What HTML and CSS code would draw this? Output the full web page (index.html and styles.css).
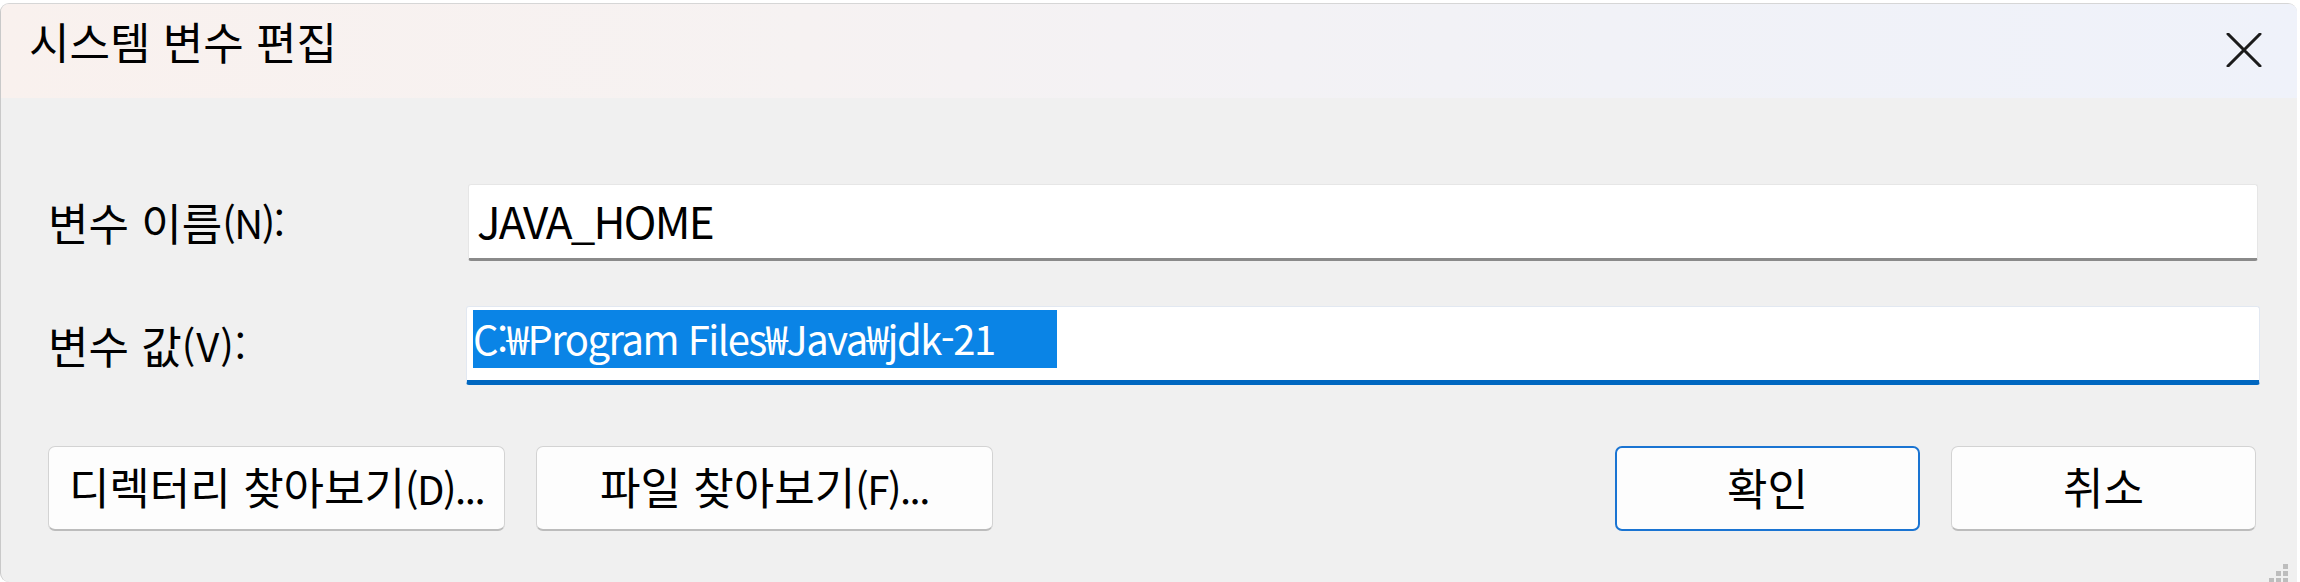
FILE: index.html
```html
<!DOCTYPE html>
<html lang="ko">
<head>
<meta charset="utf-8">
<title>시스템 변수 편집</title>
<link rel="stylesheet" href="styles.css">
</head>
<body>
<div class="window">
  <header class="titlebar">
    <span class="title">시스템 변수 편집</span>
    <svg class="close" width="36" height="34" viewBox="0 0 36 34" aria-label="닫기">
      <path d="M2 1 L34 33 M34 1 L2 33" stroke="#1b1b1b" stroke-width="3" stroke-linecap="round"/>
    </svg>
  </header>
  <main class="content">
    <div class="form">
      <label class="label">변수 이름<span class="latin">(N):</span></label>
      <div class="field"><span class="value">JAVA_HOME</span></div>
      <label class="label">변수 값<span class="latin wider">(V):</span></label>
      <div class="field focused"><span class="selected">C:₩Program Files₩Java₩jdk-21</span></div>
    </div>
    <div class="buttons">
      <div class="group">
        <button class="btn wide">디렉터리 찾아보기<span class="latin">(D)...</span></button>
        <button class="btn wide">파일 찾아보기<span class="latin">(F)...</span></button>
      </div>
      <div class="group">
        <button class="btn primary">확인</button>
        <button class="btn">취소</button>
      </div>
    </div>
  </main>
  <svg class="grip" width="24" height="24" viewBox="0 0 24 24">
    <rect x="16" y="2" width="5" height="5" fill="#bdbdbd"/>
    <rect x="9" y="9" width="5" height="5" fill="#bdbdbd"/>
    <rect x="16" y="9" width="5" height="5" fill="#bdbdbd"/>
    <rect x="2" y="16" width="5" height="5" fill="#bdbdbd"/>
    <rect x="9" y="16" width="5" height="5" fill="#bdbdbd"/>
    <rect x="16" y="16" width="5" height="5" fill="#bdbdbd"/>
  </svg>
</div>
</body>
</html>
```
FILE: styles.css
```css
* { box-sizing: border-box; }
html, body { margin: 0; padding: 0; background: #ffffff; }
body {
  font-family: "Noto Sans CJK KR", "Noto Sans", sans-serif;
  color: #000;
  overflow: hidden;
}
.window {
  position: relative;
  margin-top: 3px;
  width: 2297px;
  height: 579px;
  background: #f0f0f0;
  border-radius: 9px 9px 0 9px;
  border-left: 1px solid #c9c9c9;
  border-top: 1px solid #d6d6d6;
  display: flex;
  flex-direction: column;
  overflow: hidden;
}
.titlebar {
  height: 94px;
  flex: none;
  display: flex;
  align-items: center;
  justify-content: space-between;
  padding: 0 35px 4px 28px;
  background: linear-gradient(90deg, #f9f1ee 0%, #f6f2f2 35%, #f1f2f7 70%, #eff2fa 100%);
}
.title {
  font-size: 44px;
  line-height: 1;
  margin-bottom: 16px;
}
.close { display: block; margin-top: 2px; }
.content {
  flex: 1;
  padding: 86px 39px 0 47px;
  display: flex;
  flex-direction: column;
}
.form {
  display: grid;
  grid-template-columns: 420px 1fr;
  grid-template-rows: 77px 79px;
  row-gap: 45px;
  align-items: stretch;
}
.label {
  font-size: 44px;
  line-height: 1;
  display: flex;
  align-items: center;
  padding-bottom: 2px;
  white-space: pre;
}
.latin {
  letter-spacing: -1.5px;
  font-size: 40px;
}
.latin.wider { letter-spacing: 1px; }
.field {
  background: #ffffff;
  border: 1px solid #e6e6e6;
  border-bottom: 3px solid #8a8a8a;
  border-radius: 3px;
  display: flex;
  align-items: center;
  padding: 0 0 4px 8px;
  font-size: 44px;
  line-height: 1;
}
.field.focused {
  border-color: #e2e8f1;
  border-bottom: 5px solid #0067c0;
  margin-left: -2px;
  margin-right: -2px;
  padding: 3px 0 3px 6px;
  align-items: flex-start;
}
.value { letter-spacing: -1.8px; }
.selected {
  display: inline-flex;
  align-items: center;
  width: 584px;
  height: 58px;
  background: #0a84e6;
  color: #ffffff;
  font-size: 40px;
  letter-spacing: -1.5px;
  white-space: nowrap;
  padding-bottom: 2px;
}
.buttons {
  margin-top: 61px;
  display: flex;
  justify-content: space-between;
  padding-right: 2px;
}
.group { display: flex; gap: 31px; }
.btn {
  font-family: inherit;
  font-size: 44px;
  line-height: 1;
  color: #000;
  width: 305px;
  height: 85px;
  background: #fdfdfd;
  border: 1px solid #d3d3d3;
  border-bottom: 2px solid #bcbcbc;
  border-radius: 7px;
  padding: 0 0 4px 0;
  white-space: nowrap;
}
.btn.wide { width: 457px; padding: 0 4px 4px 4px; }
.btn.primary {
  border: 2px solid #1a74d2;
}
.grip {
  position: absolute;
  right: 6px;
  bottom: -4px;
}
```
